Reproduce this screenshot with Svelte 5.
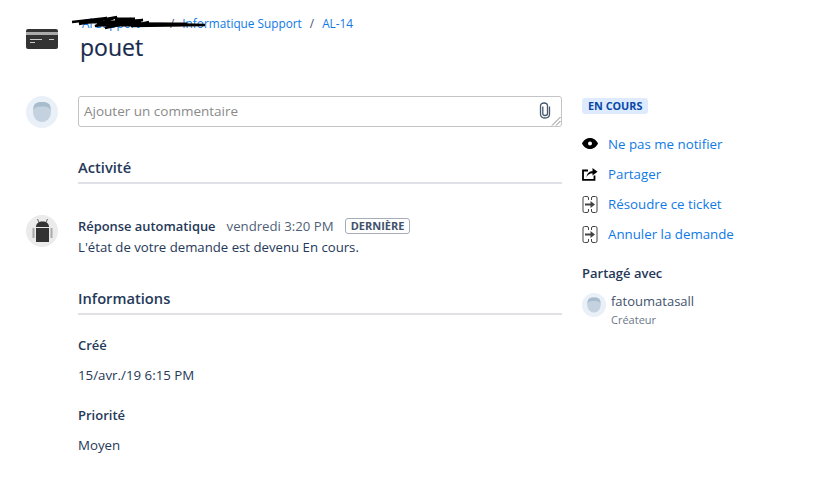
<script>
  const actions = [
    { label: 'Ne pas me notifier', icon: 'eye' },
    { label: 'Partager', icon: 'share' },
    { label: 'Résoudre ce ticket', icon: 'transition' },
    { label: 'Annuler la demande', icon: 'transition' }
  ];
</script>

<div class="page">
  <header class="head">
    <svg class="card" viewBox="0 0 32 20" width="32" height="20" aria-hidden="true">
      <rect width="32" height="20" rx="2" fill="#333" />
      <rect y="3" width="32" height="3" fill="#aaa" />
      <rect x="4" y="10" width="12" height="1" fill="#ccc" />
      <rect x="23" y="10" width="5" height="1" fill="#ccc" />
      <rect x="4" y="13" width="5" height="1" fill="#ccc" />
    </svg>
    <div class="titles">
      <nav class="crumbs">
        <a class="first">Al Support</a><span class="sep">/</span><a>Informatique Support</a><span class="sep">/</span><a>AL-14</a>
        <svg class="scribble" viewBox="0 0 135 16" width="135" height="16" aria-hidden="true">
          <path d="M1 7 L36 3 L8 9 L46 2 L24 11 L60 4 L34 13 L72 5 L30 8 L90 9 L134 10 L60 11 L78 7" fill="none" stroke="#000" stroke-width="2.400" />
          <path d="M8 7 h62 M26 10 h45 M44 4 h20 M70 9 h46" stroke="#000" stroke-width="3" fill="none" />
        </svg>
      </nav>
      <h1>pouet</h1>
    </div>
  </header>

  <div class="body">
    <main class="main">
      <div class="row comment">
        <svg class="avatar" viewBox="0 0 32 32" width="32" height="32" aria-hidden="true">
          <circle cx="16" cy="16" r="16" fill="#e9f0f8" />
          <path d="M7 15 C7 8 10 6 16 6 C22 6 25 8 25 15 C25 22 21 26 16 26 C11 26 7 22 7 15Z" fill="#c4d2df" />
          <path d="M7.500 14 C7 8 10 6 16 6 C22 6 25 8 24.500 14 C23 11 21 10.500 16 10.500 C11 10.500 9 11 7.500 14Z" fill="#a7bccd" />
        </svg>
        <div class="field">
          <span class="placeholder">Ajouter un commentaire</span>
          <svg class="clip" viewBox="0 0 12 17" width="12" height="17" aria-hidden="true">
            <path d="M10.500 4.500 V12 C10.500 14.500 8.500 16 6 16 C3.500 16 1.500 14.500 1.500 12 V4 C1.500 2.200 3 1 5 1 C7 1 8.500 2.200 8.500 4 V11.500 C8.500 12.800 7.500 13.500 6 13.500 C4.500 13.500 3.800 12.800 3.800 11.500 V4.500" fill="none" stroke="#46586b" stroke-width="1.300" />
          </svg>
          <svg class="grip" viewBox="0 0 10 10" width="10" height="10" aria-hidden="true">
            <path d="M1 9.500 L9.500 1 M5 9.500 L9.500 5" stroke="#666" stroke-width="0.800" />
          </svg>
        </div>
      </div>

      <h2 class="section activity">Activité</h2>

      <div class="row event">
        <svg class="avatar" viewBox="0 0 32 32" width="32" height="32" aria-hidden="true">
          <circle cx="16" cy="16" r="16" fill="#ebebeb" />
          <path d="M10 12 C10 8.500 12.500 6.500 16.500 6.500 C20.500 6.500 23 8.500 23 12Z" fill="#333" />
          <path d="M13 7.500 L11.500 4 M20 7.500 L21.500 4" stroke="#555" stroke-width="0.900" />
          <rect x="10" y="13" width="13" height="14" fill="#333" />
          <rect x="6.500" y="13" width="2" height="10" fill="#aaa" />
          <rect x="24.500" y="13" width="2" height="10" fill="#aaa" />
        </svg>
        <div class="event-text">
          <div class="meta">
            <strong>Réponse automatique</strong>
            <span class="when">vendredi 3:20 PM</span>
            <span class="latest">DERNIÈRE</span>
          </div>
          <p>L'état de votre demande est devenu En cours.</p>
        </div>
      </div>

      <h2 class="section info">Informations</h2>
      <dl>
        <dt>Créé</dt>
        <dd>15/avr./19 6:15 PM</dd>
        <dt>Priorité</dt>
        <dd>Moyen</dd>
      </dl>
    </main>

    <aside class="side">
      <span class="status">EN COURS</span>
      <ul class="actions">
        {#each actions as a}
          <li>
            <span class="ico">
              {#if a.icon === 'eye'}
                <svg viewBox="0 0 16 12" width="16" height="12" aria-hidden="true">
                  <path fill-rule="evenodd" d="M0 5.500 C2 1.500 5 0 8 0 C11 0 14 1.500 16 5.500 C14 9.500 11 11 8 11 C5 11 2 9.500 0 5.500Z M8 3.500 A2 2 0 1 0 8 7.500 A2 2 0 1 0 8 3.500Z" fill="#000" />
                </svg>
              {:else if a.icon === 'share'}
                <svg viewBox="0 0 16 14" width="16" height="14" aria-hidden="true">
                  <path d="M6 3.500 H1 V12.800 H12.500 V8.500" fill="none" stroke="#000" stroke-width="1.800" />
                  <path d="M4.500 10 C5 6 7.500 4.200 10.500 4.200 V1 L15.500 4.800 L10.500 8.500 V6.300 C8 6.300 6 7.500 4.500 10Z" fill="#000" />
                </svg>
              {:else}
                <svg viewBox="0 0 16 17" width="16" height="17" aria-hidden="true">
                  <path d="M6.500 4 V2 Q6.500 0.500 5 0.500 H2.500 Q1 0.500 1 2 V15 Q1 16.500 2.500 16.500 H5 Q6.500 16.500 6.500 15 V13 M9.500 4 V2 Q9.500 0.500 11 0.500 H13.500 Q15 0.500 15 2 V15 Q15 16.500 13.500 16.500 H11 Q9.500 16.500 9.500 15 V13" fill="none" stroke="#444" stroke-width="1" />
                  <path d="M3 7.500 H8.500 V5 L13 8.500 L8.500 12 V9.500 H3Z" fill="#444" />
                </svg>
              {/if}
            </span>
            <a>{a.label}</a>
          </li>
        {/each}
      </ul>
      <h3>Partagé avec</h3>
      <div class="person">
        <svg class="mini" viewBox="0 0 32 32" width="24" height="24" aria-hidden="true">
          <circle cx="16" cy="16" r="16" fill="#e9f0f8" />
          <path d="M7 15 C7 8 10 6 16 6 C22 6 25 8 25 15 C25 22 21 26 16 26 C11 26 7 22 7 15Z" fill="#c4d2df" />
          <path d="M7.500 14 C7 8 10 6 16 6 C22 6 25 8 24.500 14 C23 11 21 10.500 16 10.500 C11 10.500 9 11 7.500 14Z" fill="#a7bccd" />
        </svg>
        <div>
          <div class="name">fatoumatasall</div>
          <div class="role">Créateur</div>
        </div>
      </div>
    </aside>
  </div>
</div>

<style>
  :global(body) { margin: 0; background: #fff; }
  .page {
    width: 823px;
    height: 497px;
    overflow: hidden;
    box-sizing: border-box;
    padding: 14px 0 0 26px;
    font-family: "Open Sans", "Noto Sans", sans-serif;
    font-size: 13px;
    color: #253858;
  }
  a { color: #0f7ae5; text-decoration: none; }
  .head { display: flex; align-items: flex-start; }
  .card { margin-top: 15px; flex: none; }
  .titles { margin-left: 22px; }
  .crumbs { position: relative; height: 18px; line-height: 18px; font-size: 11.800px; white-space: nowrap; }
  .first { display: inline-block; width: 82px; padding-left: 2px; box-sizing: border-box; }
  .sep { color: #42526e; margin: 0 8px; }
  .scribble { position: absolute; left: -9px; top: 1px; }
  h1 {
    margin: -1px 0 0;
    font-size: 23px;
    line-height: 32px;
    font-weight: 400;
    -webkit-text-stroke: 0.2px #172b4d;
    color: #172b4d;
  }
  .body { display: flex; margin-top: 33px; }
  .main { width: 536px; flex: none; }
  .row { display: flex; gap: 20px; }
  .avatar { flex: none; }
  .field {
    position: relative;
    width: 484px;
    height: 31px;
    box-sizing: border-box;
    border: 1px solid #c4c4c4;
    border-radius: 3px;
    padding: 0 5px;
    line-height: 29px;
    font-size: 13.500px;
    color: #8a8a8a;
  }
  .clip { position: absolute; right: 10px; top: 5px; }
  .grip { position: absolute; right: 0; bottom: 0; }
  .section {
    margin: 0 0 0 52px;
    font-size: 14.700px;
    line-height: 20px;
    font-weight: 600;
    color: #253858;
    border-bottom: 2px solid #dfe1e6;
    padding-bottom: 5px;
  }
  .activity { margin-top: 29px; }
  .event { margin-top: 31px; }
  .event-text { padding-top: 2px; }
  .meta { display: flex; align-items: center; gap: 11px; height: 18px; line-height: 18px; }
  .meta strong { font-weight: 600; font-size: 12.900px; }
  .when { color: #505f79; font-size: 13.200px; }
  .latest {
    border: 1px solid #a5adba;
    border-radius: 3px;
    font-size: 11px;
    font-weight: 700;
    line-height: 14px;
    padding: 0 5px;
    color: #42526e;
  }
  .event-text p { margin: 3px 0 0; font-size: 13.200px; line-height: 18px; }
  .info { margin-top: 32px; }
  dl { margin: 0 0 0 52px; }
  dt { font-weight: 600; font-size: 13px; line-height: 18px; margin-top: 21px; }
  dd { margin: 12px 0 0; line-height: 18px; font-size: 13.300px; }
  dd + dt { margin-top: 22px; }
  .side { margin-left: 20px; flex: none; width: 220px; }
  .status {
    display: inline-block;
    background: #deebff;
    color: #0747a6;
    border-radius: 3px;
    font-size: 10.800px;
    font-weight: 700;
    line-height: 16px;
    padding: 0 6px;
    margin-top: 2px;
  }
  .actions { list-style: none; margin: 15px 0 0; padding: 0; }
  .actions li { display: flex; align-items: center; height: 30px; font-size: 13.300px; }
  .ico { width: 26px; flex: none; display: flex; align-items: center; }
  h3 { margin: 15px 0 0; font-size: 13px; line-height: 18px; font-weight: 600; }
  .person { display: flex; gap: 5px; margin-top: 11px; }
  .mini { flex: none; }
  .name { font-size: 13px; line-height: 16px; color: #42526e; }
  .role { font-size: 11px; line-height: 16px; margin-top: 3px; color: #6b778c; }
</style>
